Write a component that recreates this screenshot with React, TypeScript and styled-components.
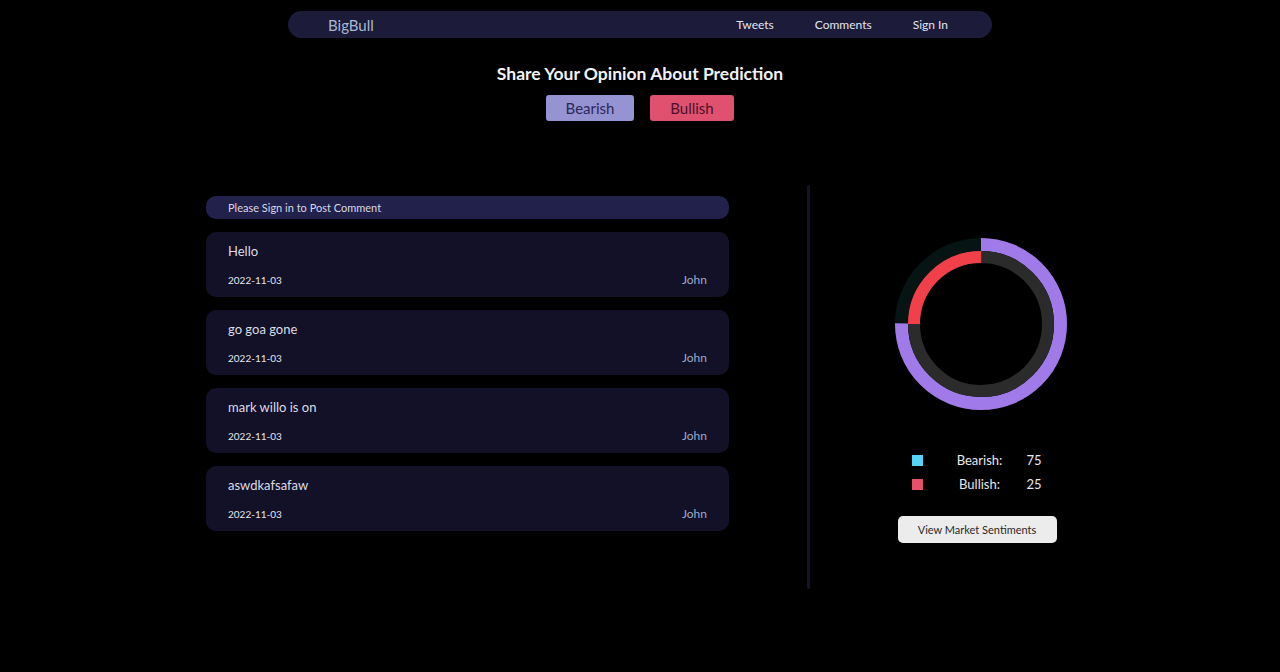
import React, { FC } from "react";
import styled, { createGlobalStyle } from "styled-components";

const GlobalStyle = createGlobalStyle`
    html, body {
        margin: 0;
        padding: 0;
        background: #000;
    }
    body {
        font-family: Lato, "Noto Sans", sans-serif;
        color: #e8e8ee;
    }
`;

const Page = styled.div`
    width: 1280px;
    min-height: 672px;
    background: #000;
    display: flex;
    flex-direction: column;
    align-items: center;
`;

const NavBar = styled.nav`
    margin-top: 11px;
    width: 704px;
    height: 27px;
    border-radius: 14px;
    background: #1c1b3a;
    display: flex;
    align-items: center;
    padding: 0 44px 0 40px;
    box-sizing: border-box;
`;

const Brand = styled.a`
    font-size: 15px;
    color: #a9b8d2;
    text-decoration: none;
    margin-right: auto;
`;

const NavLink = styled.a`
    font-size: 12px;
    color: #e4e4ee;
    text-decoration: none;
    margin-left: 41px;
`;

const Heading = styled.h2`
    margin: 26px 0 0;
    font-size: 17.5px;
    font-weight: 700;
    color: #f2f2f6;
    line-height: 20px;
`;

const VoteRow = styled.div`
    margin-top: 11px;
    display: flex;
    gap: 16px;
`;

const VoteButton = styled.button<{ $bg: string; $fg: string; $w: number }>`
    width: ${p => p.$w}px;
    height: 26px;
    border: none;
    border-radius: 3px;
    background: ${p => p.$bg};
    color: ${p => p.$fg};
    font-family: inherit;
    font-size: 15px;
    padding: 0;
    cursor: pointer;
`;

const Main = styled.div`
    margin-top: 64px;
    align-self: flex-start;
    margin-left: 206px;
    display: flex;
`;

const CommentColumn = styled.div`
    width: 523px;
    padding-top: 11px;
    display: flex;
    flex-direction: column;
    gap: 13px;
`;

const SignInBar = styled.div`
    height: 23px;
    border-radius: 10px;
    background: #22214b;
    font-size: 11px;
    color: #d8d8e4;
    display: flex;
    align-items: center;
    padding-left: 22px;
`;

const Card = styled.div`
    height: 65px;
    border-radius: 10px;
    background: #121128;
    box-sizing: border-box;
    padding: 11px 22px 0;
    display: flex;
    flex-direction: column;
`;

const CardText = styled.div`
    font-size: 13px;
    color: #dcdce4;
    line-height: 17px;
`;

const CardFooter = styled.div`
    margin-top: 13px;
    display: flex;
    justify-content: space-between;
    align-items: center;
    line-height: 14px;
`;

const DateText = styled.span`
    color: #e6e6ec;
    font-size: 10px;
`;

const Author = styled.span`
    color: #9fa9c6;
    font-size: 12px;
`;

const Divider = styled.div`
    margin-left: 78px;
    width: 3px;
    height: 404px;
    background: #14132b;
    border-radius: 2px;
`;

const SentimentColumn = styled.div`
    width: 334px;
    display: flex;
    flex-direction: column;
    align-items: center;
    padding-top: 53px;
`;

const Donut = styled.svg`
    margin-left: 8px;
    display: block;
`;

const Legend = styled.div`
    margin-top: 43px;
    display: flex;
    flex-direction: column;
    gap: 9px;
`;

const LegendRow = styled.div`
    display: flex;
    align-items: center;
    font-size: 13px;
    line-height: 15px;
    color: #e8e8ee;
`;

const Swatch = styled.span<{ $color: string }>`
    width: 11px;
    height: 11px;
    background: ${p => p.$color};
    margin-right: 12px;
`;

const LegendLabel = styled.span`
    width: 90px;
    text-align: center;
`;

const LegendValue = styled.span`
    width: 16px;
    margin-left: 2px;
`;

const SentimentButton = styled.button`
    margin-top: 24px;
    width: 159px;
    height: 27px;
    border: none;
    border-radius: 5px;
    background: #ececec;
    color: #2a2a2a;
    font-family: inherit;
    font-size: 11px;
    cursor: pointer;
`;

const comments = [
    { text: "Hello", date: "2022-11-03", author: "John" },
    { text: "go goa gone", date: "2022-11-03", author: "John" },
    { text: "mark willo is on", date: "2022-11-03", author: "John" },
    { text: "aswdkafsafaw", date: "2022-11-03", author: "John" },
];

const bearish = 75;
const bullish = 25;

const SentimentDonut: FC = () => {
    const outerR = 79.5;
    const innerR = 67;
    const outerC = 2 * Math.PI * outerR;
    const innerC = 2 * Math.PI * innerR;
    const total = bearish + bullish;
    return (
        <Donut width={172} height={172} viewBox="0 0 172 172">
            <circle cx={86} cy={86} r={outerR} fill="none" stroke="#061413" strokeWidth={13} />
            <circle
                cx={86}
                cy={86}
                r={outerR}
                fill="none"
                stroke="#a07ae8"
                strokeWidth={13}
                strokeDasharray={`${(outerC * bearish) / total} ${outerC}`}
                transform="rotate(-90 86 86)"
            />
            <circle cx={86} cy={86} r={innerR} fill="none" stroke="#2b2b2b" strokeWidth={12} />
            <circle
                cx={86}
                cy={86}
                r={innerR}
                fill="none"
                stroke="#f2404a"
                strokeWidth={12}
                strokeDasharray={`${(innerC * bullish) / total} ${innerC}`}
                transform="rotate(180 86 86)"
            />
        </Donut>
    );
};

const App: FC = () => (
    <Page>
        <GlobalStyle />
        <NavBar>
            <Brand href="#">BigBull</Brand>
            <NavLink href="#">Tweets</NavLink>
            <NavLink href="#">Comments</NavLink>
            <NavLink href="#">Sign In</NavLink>
        </NavBar>
        <Heading>Share Your Opinion About Prediction</Heading>
        <VoteRow>
            <VoteButton $bg="#9593d1" $fg="#2a2858" $w={88}>
                Bearish
            </VoteButton>
            <VoteButton $bg="#e0506f" $fg="#4a1228" $w={84}>
                Bullish
            </VoteButton>
        </VoteRow>
        <Main>
            <CommentColumn>
                <SignInBar>Please Sign in to Post Comment</SignInBar>
                {comments.map((c, i) => (
                    <Card key={i}>
                        <CardText>{c.text}</CardText>
                        <CardFooter>
                            <DateText>{c.date}</DateText>
                            <Author>{c.author}</Author>
                        </CardFooter>
                    </Card>
                ))}
            </CommentColumn>
            <Divider />
            <SentimentColumn>
                <SentimentDonut />
                <Legend>
                    <LegendRow>
                        <Swatch $color="#56d3f5" />
                        <LegendLabel>Bearish:</LegendLabel>
                        <LegendValue>{bearish}</LegendValue>
                    </LegendRow>
                    <LegendRow>
                        <Swatch $color="#e45168" />
                        <LegendLabel>Bullish:</LegendLabel>
                        <LegendValue>{bullish}</LegendValue>
                    </LegendRow>
                </Legend>
                <SentimentButton>View Market Sentiments</SentimentButton>
            </SentimentColumn>
        </Main>
    </Page>
);

export default App;
